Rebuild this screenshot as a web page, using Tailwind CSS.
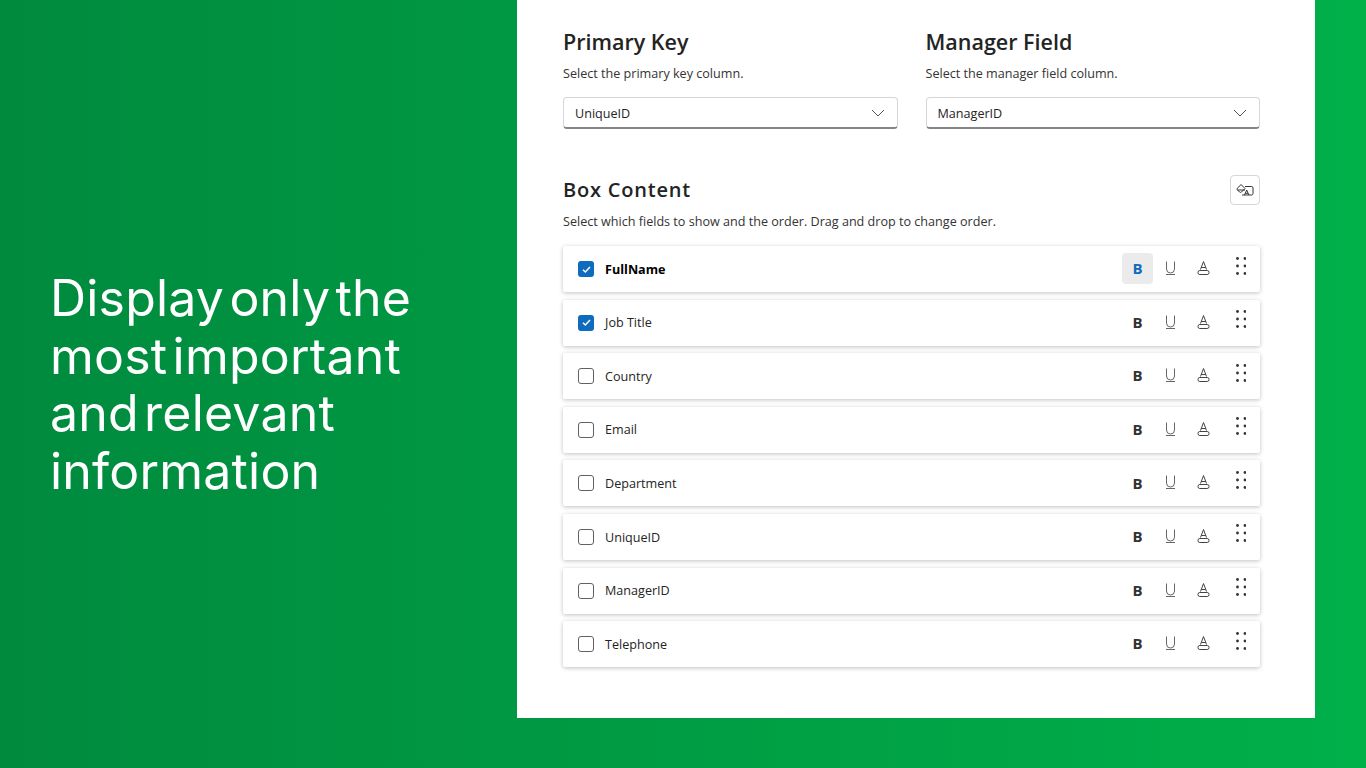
<!DOCTYPE html>
<html lang="en">
<head>
  <script src="https://cdn.jsdelivr.net/npm/@tailwindcss/browser@4"></script>
  <meta charset="UTF-8" />
  <title>Box Content</title>
</head>
<body class="bg-gradient-to-r from-[#008a3e] to-[#00b049] font-['Open_Sans',sans-serif] text-[#242424] h-[768px] overflow-hidden">

<div class="flex h-[768px] items-start">
  <!-- Left headline -->
  <div class="w-[517px] h-[768px] pl-[50px] pt-[270px] shrink-0">
    <h1 class="font-['Inter',sans-serif] text-[50px] leading-[57.5px] tracking-[0.2px] [word-spacing:-9px] text-white">Display only the<br>most important<br>and relevant<br>information</h1>
  </div>

  <!-- White panel -->
  <div class="w-[798px] h-[718px] bg-white pl-[46px] pr-[55px] shrink-0">
    <div class="flex gap-[28px] pt-[27px]">
      <div class="w-[334.5px]">
        <h2 class="text-[21.5px] leading-[30px] font-[560]">Primary Key</h2>
        <p class="text-[12.6px] leading-[18px] mt-[8px] text-[#333]">Select the primary key column.</p>
        <div class="mt-[14px] h-[32px] flex items-center justify-between pl-[11px] pr-[12px] border border-[#d6d6d6] border-b-[#858585] border-b-2 rounded-[4px] text-[12.6px]">
          <span class="pt-[3px]">UniqueID</span>
          <svg class="w-[14px] h-[14px]" viewBox="0 0 14 14" fill="none" stroke="#555" stroke-width="1"><path d="M1 4l6 6 6-6"/></svg>
        </div>
      </div>
      <div class="w-[334.5px]">
        <h2 class="text-[21.5px] leading-[30px] font-[560]">Manager Field</h2>
        <p class="text-[12.6px] leading-[18px] mt-[8px] text-[#333]">Select the manager field column.</p>
        <div class="mt-[14px] h-[32px] flex items-center justify-between pl-[11px] pr-[12px] border border-[#d6d6d6] border-b-[#858585] border-b-2 rounded-[4px] text-[12.6px]">
          <span class="pt-[3px]">ManagerID</span>
          <svg class="w-[14px] h-[14px]" viewBox="0 0 14 14" fill="none" stroke="#555" stroke-width="1"><path d="M1 4l6 6 6-6"/></svg>
        </div>
      </div>
    </div>

    <div class="flex items-center justify-between mt-[46px] h-[30px]">
      <h2 class="text-[20px] font-semibold tracking-[0.8px]">Box Content</h2>
      <button class="w-[30px] h-[30px] flex items-center justify-center border border-[#d6d6d6] rounded-[4px]">
        <svg class="w-[18px] h-[14px]" viewBox="0 0 18 14" fill="none" stroke="#333" stroke-width="1"><path d="M9 3.500h6.500a1.500 1.500 0 0 1 1.500 1.500v5.500a1.500 1.500 0 0 1-1.500 1.500H6"/><path d="M5 1.500l4 4-3.500 3.500a1.500 1.500 0 0 1-2 0l-2-2a1.200 1.200 0 0 1 0-1.800z"/><path d="M1.500 7h7.500"/><path d="M8.500 12l2.200-5 2.200 5M9.400 10.300h2.600"/></svg>
      </button>
    </div>
    <p class="text-[12.6px] leading-[18px] mt-[8px] text-[#333]">Select which fields to show and the order. Drag and drop to change order.</p>

    <div class="flex flex-col gap-[7.6px] mt-[15px]">
      <div class="h-[46px] flex items-center pl-[15px] rounded-[2px] shadow-[0_1px_4px_rgba(0,0,0,0.25)]">
        <span class="w-[16px] h-[16px] rounded-[3px] bg-[#0f6cbd] flex items-center justify-center"><svg class="w-[11px] h-[11px]" viewBox="0 0 11 11" fill="none" stroke="white" stroke-width="1.500"><path d="M2 5.800l2.300 2.200L9 3"/></svg></span>
        <span class="ml-[11px] text-[12.6px] font-bold text-black pt-[2px]">FullName</span>
        <div class="ml-auto flex items-center">
          <span class="w-[31px] h-[31px] mb-[1px] rounded-[4px] bg-[#ebebeb] flex items-center justify-center text-[15px] font-bold text-[#0f6cbd]">B</span>
          <span class="w-[2px]"></span>
          <svg class="w-[31px] h-[16px] mb-[2px]" viewBox="0 0 31 16" fill="none" stroke="#666" stroke-width="1"><path d="M11.500 1.500v7.500a4 4 0 0 0 8 0V1.500M11 14.500h9"/></svg>
          <span class="w-[2px]"></span>
          <svg class="w-[31px] h-[16px] mb-[2px]" viewBox="0 0 31 16" fill="none" stroke="#444" stroke-width="1"><path d="M12.500 9.500l3-8 3 8M13.300 7.500h4.400"/><rect x="10" y="10.500" width="11" height="4" rx="1.800"/></svg>
          <svg class="w-[10px] h-[18px] ml-[17px] mr-[14px] mb-[7px]" viewBox="0 0 10 18" fill="#333"><circle cx="1.500" cy="1.500" r="1.400"/><circle cx="9" cy="1.500" r="1.400"/><circle cx="1.500" cy="9" r="1.400"/><circle cx="9" cy="9" r="1.400"/><circle cx="1.500" cy="16.500" r="1.400"/><circle cx="9" cy="16.500" r="1.400"/></svg>
        </div>
      </div>
      <div class="h-[46px] flex items-center pl-[15px] rounded-[2px] shadow-[0_1px_4px_rgba(0,0,0,0.25)]">
        <span class="w-[16px] h-[16px] rounded-[3px] bg-[#0f6cbd] flex items-center justify-center"><svg class="w-[11px] h-[11px]" viewBox="0 0 11 11" fill="none" stroke="white" stroke-width="1.500"><path d="M2 5.800l2.300 2.200L9 3"/></svg></span>
        <span class="ml-[11px] text-[12.6px] pt-[2px]">Job Title</span>
        <div class="ml-auto flex items-center">
          <span class="w-[31px] h-[31px] mb-[1px] flex items-center justify-center text-[15px] font-bold text-[#333]">B</span>
          <span class="w-[2px]"></span>
          <svg class="w-[31px] h-[16px] mb-[2px]" viewBox="0 0 31 16" fill="none" stroke="#666" stroke-width="1"><path d="M11.500 1.500v7.500a4 4 0 0 0 8 0V1.500M11 14.500h9"/></svg>
          <span class="w-[2px]"></span>
          <svg class="w-[31px] h-[16px] mb-[2px]" viewBox="0 0 31 16" fill="none" stroke="#444" stroke-width="1"><path d="M12.500 9.500l3-8 3 8M13.300 7.500h4.400"/><rect x="10" y="10.500" width="11" height="4" rx="1.800"/></svg>
          <svg class="w-[10px] h-[18px] ml-[17px] mr-[14px] mb-[7px]" viewBox="0 0 10 18" fill="#333"><circle cx="1.500" cy="1.500" r="1.400"/><circle cx="9" cy="1.500" r="1.400"/><circle cx="1.500" cy="9" r="1.400"/><circle cx="9" cy="9" r="1.400"/><circle cx="1.500" cy="16.500" r="1.400"/><circle cx="9" cy="16.500" r="1.400"/></svg>
        </div>
      </div>
      <div id="rest" class="contents"></div>
    </div>
  </div>
</div>

<script>
  // remaining rows all look the same
  const fields = ["Country", "Email", "Department", "UniqueID", "ManagerID", "Telephone"];
  document.getElementById("rest").innerHTML = fields.map(name => `
    <div class="h-[46px] flex items-center pl-[15px] rounded-[2px] shadow-[0_1px_4px_rgba(0,0,0,0.25)]">
      <span class="w-[16px] h-[16px] rounded-[3px] border border-[#616161]"></span>
      <span class="ml-[11px] text-[12.6px] pt-[2px]">${name}</span>
      <div class="ml-auto flex items-center">
        <span class="w-[31px] h-[31px] mb-[1px] flex items-center justify-center text-[15px] font-bold text-[#333]">B</span>
        <span class="w-[2px]"></span>
        <svg class="w-[31px] h-[16px] mb-[2px]" viewBox="0 0 31 16" fill="none" stroke="#666" stroke-width="1"><path d="M11.500 1.500v7.500a4 4 0 0 0 8 0V1.500M11 14.500h9"/></svg>
        <span class="w-[2px]"></span>
        <svg class="w-[31px] h-[16px] mb-[2px]" viewBox="0 0 31 16" fill="none" stroke="#444" stroke-width="1"><path d="M12.500 9.500l3-8 3 8M13.300 7.500h4.400"/><rect x="10" y="10.500" width="11" height="4" rx="1.800"/></svg>
        <svg class="w-[10px] h-[18px] ml-[17px] mr-[14px] mb-[7px]" viewBox="0 0 10 18" fill="#333"><circle cx="1.500" cy="1.500" r="1.400"/><circle cx="9" cy="1.500" r="1.400"/><circle cx="1.500" cy="9" r="1.400"/><circle cx="9" cy="9" r="1.400"/><circle cx="1.500" cy="16.500" r="1.400"/><circle cx="9" cy="16.500" r="1.400"/></svg>
      </div>
    </div>`).join("");
</script>
</body>
</html>
